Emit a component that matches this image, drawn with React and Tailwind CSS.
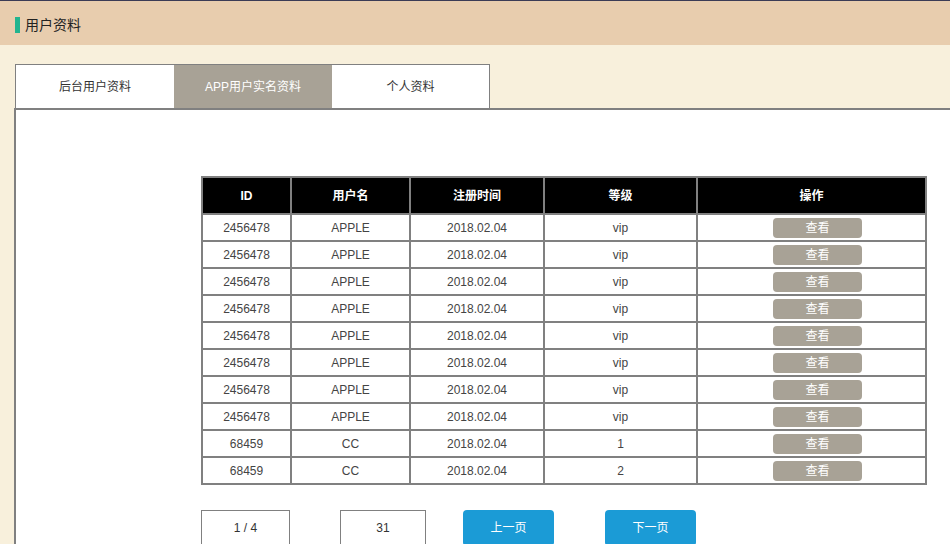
const ROWS = [
  ['2456478', 'APPLE', '2018.02.04', 'vip'],
  ['2456478', 'APPLE', '2018.02.04', 'vip'],
  ['2456478', 'APPLE', '2018.02.04', 'vip'],
  ['2456478', 'APPLE', '2018.02.04', 'vip'],
  ['2456478', 'APPLE', '2018.02.04', 'vip'],
  ['2456478', 'APPLE', '2018.02.04', 'vip'],
  ['2456478', 'APPLE', '2018.02.04', 'vip'],
  ['2456478', 'APPLE', '2018.02.04', 'vip'],
  ['68459', 'CC', '2018.02.04', '1'],
  ['68459', 'CC', '2018.02.04', '2'],
]

const TABS = ['后台用户资料', 'APP用户实名资料', '个人资料']

export default function App() {
  const active = 1

  return (
    <div
      className="w-[950px] h-[544px] overflow-hidden bg-[#f8f0dc] text-[#333]"
      style={{ fontFamily: '"Liberation Sans", "Noto Sans CJK SC", sans-serif' }}
    >
      {/* 顶部标题 */}
      <div className="h-[45px] bg-[#e8cdae] border-t border-[#3b3b55] flex items-center pl-[15px] pt-[4px]">
        <span className="w-[5px] h-[16px] bg-[#22b48f] mr-[5px]" />
        <span className="text-[14px] text-[#222]">用户资料</span>
      </div>

      {/* 选项卡 */}
      <div className="pt-[19px] pl-[15px] flex">
        {TABS.map((t, i) => (
          <div
            key={t}
            className={`w-[158px] h-[44px] flex items-center justify-center text-[12px] border-t border-[#808080] ${i === 0 ? 'border-l w-[159px]' : ''} ${i === TABS.length - 1 ? 'border-r' : ''} ${i === active ? 'bg-[#a8a296] text-white' : 'bg-white text-[#333]'}`}
          >
            {t}
          </div>
        ))}
      </div>

      {/* 内容 */}
      <div className="ml-[14px] bg-white border-l-2 border-t-2 border-[#808080] h-[436px] pt-[66px] pl-[185px]">
        <table className="border-collapse border-2 border-[#808080] text-center w-[726px]">
          <thead>
            <tr className="h-[37px] bg-black text-white text-[12px] font-bold">
              <th className="w-[89px] border-2 border-[#808080]">ID</th>
              <th className="w-[119px] border-2 border-[#808080]">用户名</th>
              <th className="w-[134px] border-2 border-[#808080]">注册时间</th>
              <th className="w-[153px] border-2 border-[#808080]">等级</th>
              <th className="border-2 border-[#808080]">操作</th>
            </tr>
          </thead>
          <tbody className="text-[12px] text-[#444]">
            {ROWS.map((r, i) => (
              <tr key={i} className="h-[27px]">
                {r.map((c, j) => (
                  <td key={j} className="border-2 border-[#808080] p-0">{c}</td>
                ))}
                <td className="border-2 border-[#808080] p-0">
                  <button className="w-[89px] h-[20px] rounded-[4px] bg-[#a8a296] text-white text-[12px] leading-[20px] ml-[12px]">
                    查看
                  </button>
                </td>
              </tr>
            ))}
          </tbody>
        </table>

        {/* 分页 */}
        <div className="flex items-start mt-[25px] text-[12px]">
          <div className="w-[89px] h-[36px] border border-[#808080] flex items-center justify-center">1 / 4</div>
          <div className="w-[86px] h-[36px] border border-[#808080] flex items-center justify-center ml-[50px]">31</div>
          <button className="w-[91px] h-[36px] rounded-[4px] bg-[#1b9bd6] text-white ml-[37px]">上一页</button>
          <button className="w-[91px] h-[36px] rounded-[4px] bg-[#1b9bd6] text-white ml-[51px]">下一页</button>
        </div>
      </div>
    </div>
  )
}
